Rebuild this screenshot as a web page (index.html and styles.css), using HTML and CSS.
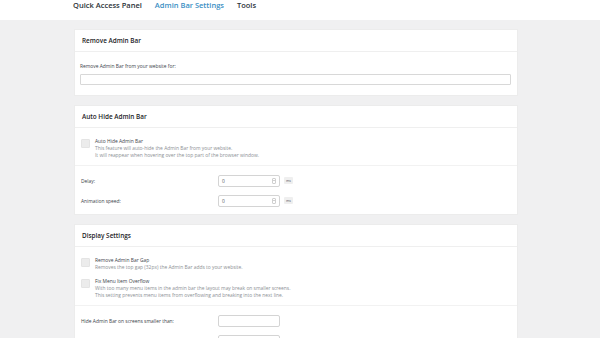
FILE: index.html
```html
<!DOCTYPE html>
<html lang="en">
<head>
    <meta charset="UTF-8">
    <title>Admin Bar Settings</title>
    <link rel="stylesheet" href="styles.css">
</head>
<body>
    <div class="tabs">
        <a href="#" class="tab">Quick Access Panel</a>
        <a href="#" class="tab active">Admin Bar Settings</a>
        <a href="#" class="tab">Tools</a>
    </div>

    <div class="main">
        <div class="card">
            <div class="card-header">Remove Admin Bar</div>
            <div class="card-body">
                <div class="field-label">Remove Admin Bar from your website for:</div>
                <div class="select-box"></div>
            </div>
        </div>

        <div class="card">
            <div class="card-header">Auto Hide Admin Bar</div>
            <div class="card-body checks">
                <div class="check-row">
                    <span class="checkbox"></span>
                    <div class="check-text">
                        <div class="check-title">Auto Hide Admin Bar</div>
                        <div class="check-desc">This feature will auto-hide the Admin Bar from your website.</div>
                        <div class="check-desc">It will reappear when hovering over the top part of the browser window.</div>
                    </div>
                </div>
            </div>
            <div class="card-body rows">
                <div class="input-row">
                    <div class="row-label">Delay:</div>
                    <div class="number-input">
                        <span>0</span>
                        <span class="spinner"></span>
                    </div>
                    <span class="unit">ms</span>
                </div>
                <div class="input-row">
                    <div class="row-label">Animation speed:</div>
                    <div class="number-input">
                        <span>0</span>
                        <span class="spinner"></span>
                    </div>
                    <span class="unit">ms</span>
                </div>
            </div>
        </div>

        <div class="card">
            <div class="card-header">Display Settings</div>
            <div class="card-body checks">
                <div class="check-row">
                    <span class="checkbox"></span>
                    <div class="check-text">
                        <div class="check-title">Remove Admin Bar Gap</div>
                        <div class="check-desc">Removes the top gap (32px) the Admin Bar adds to your website.</div>
                    </div>
                </div>
                <div class="check-row">
                    <span class="checkbox"></span>
                    <div class="check-text">
                        <div class="check-title">Fix Menu Item Overflow</div>
                        <div class="check-desc">With too many menu items in the admin bar the layout may break on smaller screens.</div>
                        <div class="check-desc">This setting prevents menu items from overflowing and breaking into the next line.</div>
                    </div>
                </div>
            </div>
            <div class="card-body rows">
                <div class="input-row">
                    <div class="row-label">Hide Admin Bar on screens smaller than:</div>
                    <div class="text-input"></div>
                </div>
                <div class="input-row">
                    <div class="row-label"></div>
                    <div class="text-input"></div>
                </div>
            </div>
        </div>
    </div>
</body>
</html>
```

FILE: styles.css
```css
body {
    margin: 0;
    padding: 0;
    font-family: "Open Sans", "Noto Sans", sans-serif;
    color: #1d2327;
    background-color: #f0f0f1;
    overflow: hidden;
}

.tabs {
    background-color: #fff;
    height: 20px;
    display: flex;
    align-items: flex-start;
    gap: 13px;
    padding-left: 73px;
}

.tab {
    font-size: 7.5px;
    font-weight: 600;
    color: #2c3338;
    text-decoration: none;
    line-height: 10px;
}

.tab.active {
    color: #3b8fc4;
}

.main {
    padding: 9px 0 0 74px;
}

.card {
    width: 444px;
    background-color: #fff;
    border: 1px solid #ececec;
    box-sizing: border-box;
    margin-bottom: 9px;
}

.card-header {
    height: 22px;
    box-sizing: border-box;
    padding: 0 7px;
    display: flex;
    align-items: center;
    font-size: 6.4px;
    font-weight: 600;
    border-bottom: 1px solid #efefef;
}

.card-body {
    padding: 10px 6px 10px 5px;
}

.field-label {
    font-size: 4.9px;
    color: #3c434a;
    line-height: 8px;
    margin-bottom: 4px;
}

.select-box {
    height: 11px;
    border: 1px solid #d8d8d8;
    border-radius: 1px;
    box-sizing: border-box;
}

.checks {
    padding: 10px 6px 6px 6px;
    display: flex;
    flex-direction: column;
    gap: 7px;
    border-bottom: 1px solid #f2f2f2;
}

.check-row {
    display: flex;
    gap: 5px;
}

.checkbox {
    width: 7px;
    height: 7px;
    margin-top: 1px;
    background-color: #ececec;
    border: 1px solid #e4e4e4;
    border-radius: 1px;
    flex-shrink: 0;
}

.check-title {
    font-size: 4.9px;
    color: #3c434a;
    line-height: 7px;
}

.check-desc {
    font-size: 4.9px;
    color: #8c8f94;
    line-height: 7px;
}

.rows {
    padding: 9px 6px 8px 6px;
    display: flex;
    flex-direction: column;
    gap: 9px;
}

.input-row {
    display: flex;
    align-items: center;
    height: 11px;
}

.row-label {
    width: 137px;
    font-size: 4.9px;
    color: #3c434a;
}

.number-input,
.text-input {
    width: 62px;
    height: 12px;
    border: 1px solid #d4d4d4;
    border-radius: 2px;
    box-sizing: border-box;
    display: flex;
    align-items: center;
    justify-content: space-between;
    padding: 0 3px;
    font-size: 4.9px;
    color: #50575e;
}

.spinner {
    width: 4px;
    height: 6px;
    border: 1px solid #d0d0d0;
    border-radius: 1px;
    box-sizing: border-box;
    background: linear-gradient(#d0d0d0, #d0d0d0) center / 100% 1px no-repeat;
}

.unit {
    margin-left: 4px;
    font-size: 3.6px;
    color: #50575e;
    background-color: #efefef;
    padding: 1px 2px;
    border-radius: 1px;
}
```
